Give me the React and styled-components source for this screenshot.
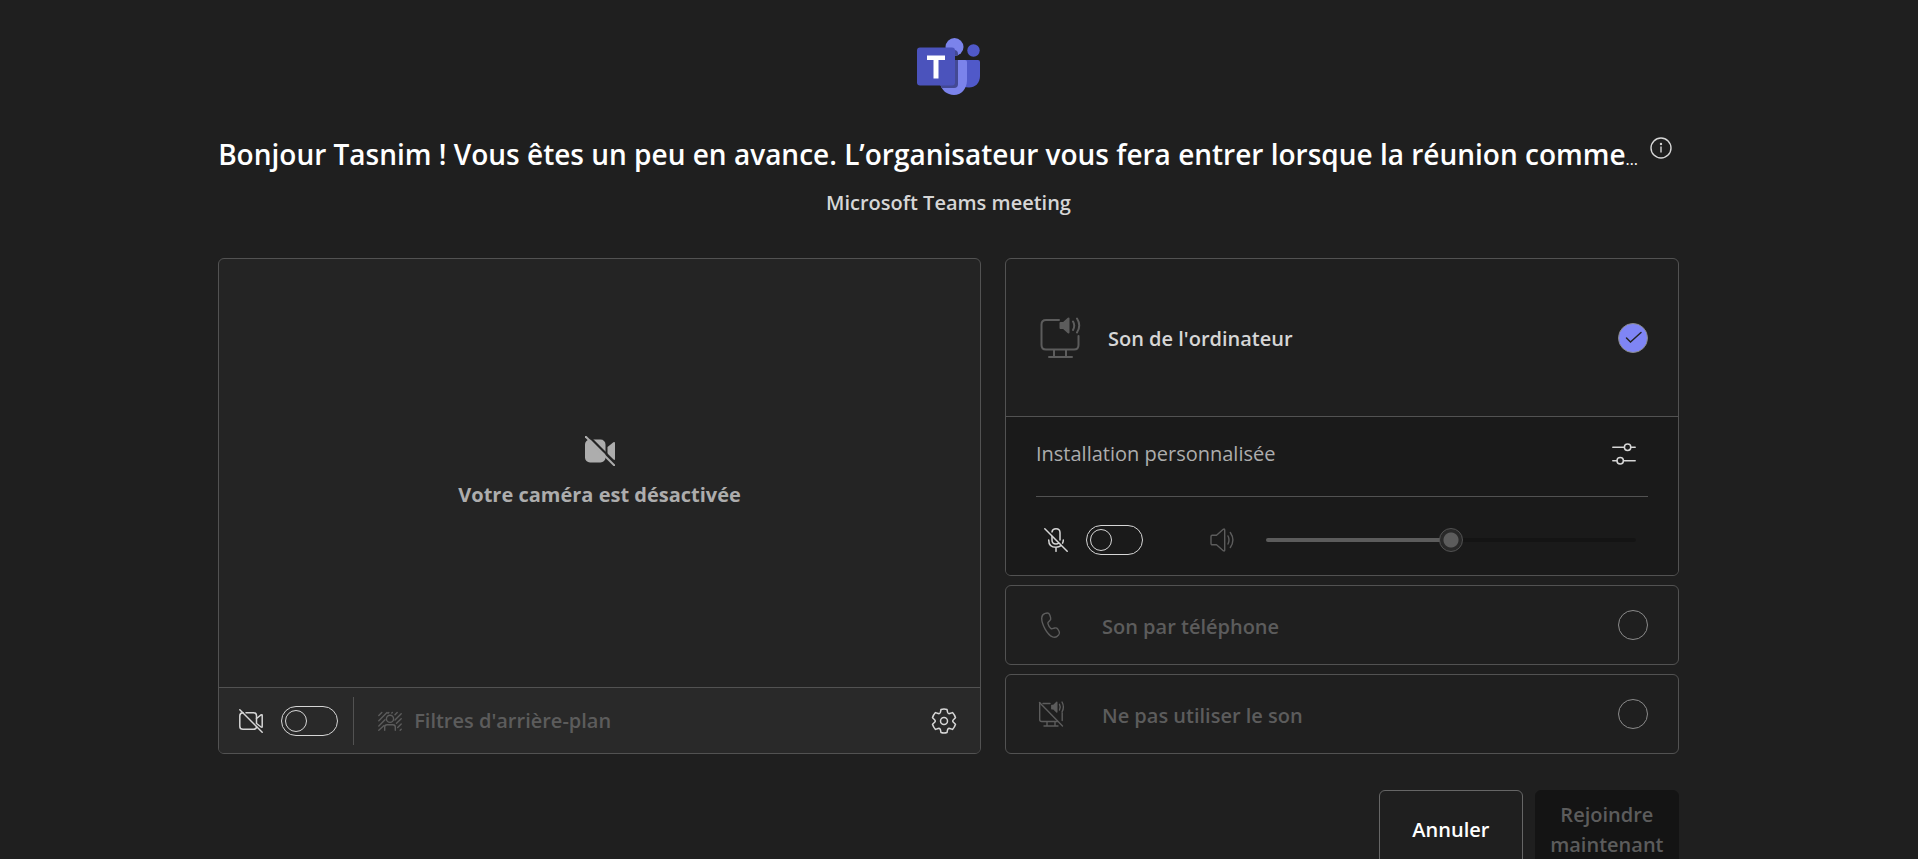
import React from "react";
import styled, { createGlobalStyle, css } from "styled-components";

const GlobalStyle = createGlobalStyle`
  *, *::before, *::after { box-sizing: border-box; }
  body {
    margin: 0;
    background: #1f1f1f;
    color: #d6d6d6;
    font-family: "Segoe UI", "Open Sans", "Noto Sans", sans-serif;
    font-size: 20px;
    line-height: 30px;
  }
  button, input { font: inherit; margin: 0; }
`;

const Page = styled.main`
  height: 100vh;
  overflow-y: auto;
  scrollbar-width: none;
  padding: 36px 21px 36px 0;
`;

const Content = styled.div`
  width: 77%;
  margin: 0 auto;
  display: flex;
  flex-direction: column;
`;

const Header = styled.header`
  display: flex;
  flex-direction: column;
  align-items: center;
  margin-bottom: 40px;
`;

const TitleRow = styled.div`
  display: flex;
  align-items: flex-start;
  gap: 4px;
  width: 100%;
  margin-top: 34px;
`;

const Title = styled.h1`
  flex: 1;
  min-width: 0;
  margin: 0;
  overflow: hidden;
  white-space: nowrap;
  color: #fff;
  font-size: 28px;
  font-weight: 600;
  line-height: 48px;
`;

const Ellipsis = styled.span`
  font-size: 16px;
  font-weight: 400;
`;

const Subtitle = styled.p`
  margin: 5px 0 0;
  font-weight: 600;
`;

const IconButton = styled.button`
  display: grid;
  place-items: center;
  flex: none;
  width: 36px;
  height: 36px;
  padding: 0;
  border: 0;
  background: none;
  color: #d6d6d6;
`;

const Panels = styled.div`
  display: grid;
  grid-template-columns: 763fr 674fr;
  gap: 24px;
`;

const panel = css`
  border: 1px solid #525252;
  border-radius: 6px;
  overflow: hidden;
`;

const VideoPanel = styled.section`
  ${panel}
  display: flex;
  flex-direction: column;
  background: #242424;
`;

const Preview = styled.div`
  flex: 1;
  display: flex;
  flex-direction: column;
  align-items: center;
  justify-content: center;
  gap: 14px;
  color: #adadad;
  font-weight: 700;
`;

const VideoBar = styled.div`
  display: flex;
  align-items: center;
  height: 66px;
  padding: 0 18px 0 20px;
  border-top: 1px solid #525252;
  background: #292929;
`;

const SwitchLabel = styled.label`
  display: flex;
  align-items: center;
  gap: 18px;
`;

const Switch = styled.input.attrs({ type: "checkbox", role: "switch" })`
  appearance: none;
  display: flex;
  align-items: center;
  width: 57px;
  height: 30px;
  padding: 0 3px;
  border: 1px solid #d6d6d6;
  border-radius: 15px;
  &::before {
    content: "";
    width: 22px;
    height: 22px;
    border: 1px solid #d6d6d6;
    border-radius: 50%;
  }
  &:checked { justify-content: flex-end; }
`;

const BarDivider = styled.span`
  width: 1px;
  height: 48px;
  margin: 0 24px 0 15px;
  background: #525252;
`;

const FilterButton = styled.button`
  display: flex;
  align-items: center;
  gap: 12px;
  margin-right: auto;
  padding: 0;
  border: 0;
  background: none;
  color: #5c5c5c;
  font-weight: 600;
`;

const AudioColumn = styled.fieldset`
  display: flex;
  flex-direction: column;
  gap: 9px;
  min-width: 0;
  margin: 0;
  padding: 0;
  border: 0;
`;

const AudioCard = styled.section`
  ${panel}
`;

const AudioOption = styled.label`
  display: flex;
  align-items: center;
  height: ${(p) => (p.$large ? 157 : 78)}px;
  padding: ${(p) => (p.$large ? "0 30px 0 34px" : "0 30px")};
  color: ${(p) => (p.$large ? "#d6d6d6" : "#5c5c5c")};
  font-weight: 600;
`;

const OptionIcon = styled.span`
  display: flex;
  color: #5c5c5c;
  width: ${(p) => (p.$large ? 68 : 66)}px;
`;

const OptionText = styled.span`
  padding-top: 3px;
`;

const RadioWrap = styled.span`
  display: grid;
  place-items: center;
  margin-left: auto;
  > * { grid-area: 1 / 1; }
`;

const Radio = styled.input.attrs({ type: "radio", name: "audio" })`
  appearance: none;
  width: 30px;
  height: 30px;
  border: 1px solid #8a8a8a;
  border-radius: 50%;
  &:checked { background: #7f85f5; }
`;

const CheckMark = styled.svg`
  pointer-events: none;
  z-index: 1;
`;

const AudioSettings = styled.div`
  padding: 0 30px;
  border-top: 1px solid #525252;
  background: #1a1a1a;
`;

const SetupRow = styled.div`
  display: flex;
  align-items: center;
  justify-content: space-between;
  height: 80px;
  padding: 0 6px 6px 0;
  border-bottom: 1px solid #525252;
  color: #adadad;
`;

const VolumeRow = styled.div`
  display: flex;
  align-items: center;
  height: 78px;
  padding: 8px 12px 0 8px;
`;

const VolumeLabel = styled.label`
  flex: 1;
  display: flex;
  align-items: center;
  gap: 32px;
  margin-left: 67px;
  color: #5c5c5c;
`;

const Slider = styled.input.attrs({ type: "range" })`
  appearance: none;
  flex: 1;
  min-width: 0;
  height: 24px;
  background: none;
  &::-webkit-slider-runnable-track {
    height: 4px;
    border-radius: 2px;
    background: linear-gradient(to right, #5c5c5c 50%, #141414 50%);
  }
  &::-webkit-slider-thumb {
    appearance: none;
    width: 24px;
    height: 24px;
    margin-top: -10px;
    border: 1px solid #525252;
    border-radius: 50%;
    background: radial-gradient(circle, #5c5c5c 7px, #292929 8px);
  }
`;

const Actions = styled.footer`
  display: flex;
  justify-content: flex-end;
  gap: 12px;
  margin-top: 36px;
`;

const ActionButton = styled.button`
  width: 144px;
  min-height: 80px;
  padding: 8px;
  border: 1px solid ${(p) => (p.$primary ? "#141414" : "#666")};
  border-radius: 6px;
  background: ${(p) => (p.$primary ? "#141414" : "#1f1f1f")};
  color: ${(p) => (p.$primary ? "#5c5c5c" : "#fff")};
  font-weight: 600;
`;

const Icon = ({ size = 24, box = 24, stroke = 1.5, children }) => (
  <svg
    width={size}
    height={size}
    viewBox={`0 0 ${box} ${box}`}
    fill="none"
    stroke="currentColor"
    strokeWidth={stroke}
    strokeLinecap="round"
    strokeLinejoin="round"
    aria-hidden="true"
  >
    {children}
  </svg>
);

const TeamsLogo = () => (
  <svg width="66" height="60" viewBox="0 0 66 60" role="img" aria-label="Microsoft Teams">
    <defs>
      <clipPath id="people">
        <circle cx="38.5" cy="11" r="9" />
        <path d="M27 24H49Q51 24 51 26V44C51 53 45 59 38 59C31 59 25 54 24 47Z" />
      </clipPath>
    </defs>
    <circle cx="57.5" cy="14.5" r="6.2" fill="#5059c9" />
    <path d="M46 24H62Q64 24 64 26V40C64 47 59 51.5 53 51.5Q50 51.5 47 50Z" fill="#5059c9" />
    <circle cx="38.5" cy="11" r="9" fill="#7b83eb" />
    <path d="M27 24H49Q51 24 51 26V44C51 53 45 59 38 59C31 59 25 54 24 47Z" fill="#7b83eb" />
    <rect x="4" y="14" width="38" height="38" rx="4" fill="#434994" clipPath="url(#people)" />
    <rect x="1" y="11.5" width="38" height="38" rx="3" fill="#4b53bc" />
    <path d="M11 19.5H29V24H22.5V42.5H17.5V24H11Z" fill="#fff" />
  </svg>
);

const InfoIcon = () => (
  <Icon size={22} box={22} stroke={1.4}>
    <circle cx="11" cy="11" r="10" />
    <path d="M11 10V15" />
    <circle cx="11" cy="7" r="0.5" fill="currentColor" />
  </Icon>
);

const CameraOffFilled = () => (
  <svg width="30" height="30" viewBox="0 0 30 30" aria-hidden="true">
    <defs>
      <mask id="cameraGap">
        <rect width="30" height="30" fill="#fff" />
        <path d="M1.5 -2L33 29.5" stroke="#000" strokeWidth="2.2" />
      </mask>
    </defs>
    <g fill="currentColor" mask="url(#cameraGap)">
      <rect x="0" y="3.5" width="20.5" height="23" rx="5" />
      <path d="M22.5 11L28.4 6.3Q30 5.4 30 7.2V22.8Q30 24.6 28.4 23.7L22.5 19Z" />
    </g>
    <path d="M0.8 0.8L29.2 29.2" stroke="currentColor" strokeWidth="2" strokeLinecap="round" />
  </svg>
);

const CameraOff = () => (
  <Icon>
    <path d="M4 3.7Q0.8 3.9 0.8 6.8V17.2Q0.8 20.3 4 20.3H14.5Q17.5 20.3 17.5 17.5M7 3.7H14.5Q17.5 3.7 17.5 6.8V14" />
    <path d="M17.5 9.5L22 5.9Q23.2 5.2 23.2 6.5V17.5Q23.2 18.8 22 18L17.5 14.5" />
    <path d="M0.8 0.8L23.2 23.2" />
  </Icon>
);

const FilterIcon = () => (
  <Icon stroke={1.4}>
    <path d="M0.8 6.5L3.8 3.5M0.8 11.8L9 3.5M0.8 17L7 10.8M0.8 21.2L6 16.5M10.8 3.5L10 4.3M14.3 3.5L13.8 4M19.2 3.5L17 5.8M23.2 4.8L17 11M23.2 9.8L18.5 14.3M23.2 15L19.7 18.5M23.2 20.2L22.2 21.2" />
    <circle cx="12" cy="9.8" r="3.6" />
    <path d="M6.7 21.2V18Q6.7 15.8 9 15.8H15Q17.3 15.8 17.3 18V21.2" />
  </Icon>
);

const GearIcon = () => (
  <Icon size={26} box={26}>
    <path d="M10 1.5Q13 0.5 16 1.5L16.6 4.4Q17.1 6 18.8 5.5L21.5 4.6Q23.7 6.9 24.5 9.8L22.4 11.7Q21 13 22.4 14.3L24.5 16.2Q23.7 19.1 21.5 21.4L18.8 20.5Q17.1 20 16.6 21.6L16 24.5Q13 25.5 10 24.5L9.4 21.6Q8.9 20 7.2 20.5L4.5 21.4Q2.3 19.1 1.5 16.2L3.6 14.3Q5 13 3.6 11.7L1.5 9.8Q2.3 6.9 4.5 4.6L7.2 5.5Q8.9 6 9.4 4.4Z" />
    <circle cx="13" cy="13" r="3.5" />
  </Icon>
);

const ComputerAudio = () => (
  <Icon size={42} box={42} stroke={2}>
    <path d="M19 3H6Q1.5 3 1.5 7.5V28Q1.5 32.5 6 32.5H34Q38.5 32.5 38.5 28V19M14 32.5V40M26 32.5V40M9 40H32" />
    <path d="M20.5 6H23.5L28.5 1.5V15.5L23.5 11H20.5Z" fill="currentColor" />
    <path d="M33 4.5Q35.5 8.5 33 13M37 1.5Q41.5 8.5 37 15.5" />
  </Icon>
);

const SettingsSliders = () => (
  <Icon>
    <path d="M0.8 5.3H12.2M19 5.3H23.2M0.8 18.7H4.8M11.6 18.7H23.2" />
    <circle cx="15.6" cy="5.3" r="3.2" />
    <circle cx="8.2" cy="18.7" r="3.2" />
  </Icon>
);

const MicOff = () => (
  <Icon>
    <path d="M8 3.9Q8.5 0.8 12 0.8Q16 0.8 16 4.8V12M8 8.5V12Q8 16 12 16Q13.6 16 14.7 15.2" />
    <path d="M4.7 12Q4.7 19.3 12 19.3Q15 19.3 17 17.7M19.3 12Q19.3 13.8 18.6 15.2M12 19.3V23.3" />
    <path d="M0.8 0.8L23.2 23.2" />
  </Icon>
);

const Speaker = () => (
  <Icon stroke={1.4}>
    <path d="M1 8.5Q1 7.3 2.2 7.3H6.5L13.3 1.3Q14.7 0.4 14.7 2V22Q14.7 23.6 13.3 22.7L6.5 16.7H2.2Q1 16.7 1 15.5Z" />
    <path d="M18 8Q20 12 18 16M20.3 4.5Q25.5 12 20.3 19.5" />
  </Icon>
);

const Phone = () => (
  <Icon size={30} box={30} stroke={1.4}>
    <path d="M8.6 3.7L10.2 3.2Q12.8 2.6 13.8 5L14.6 7.6Q15.1 9.3 13.9 10.6L12.2 12.3Q11.7 12.9 12 13.9Q12.7 16.5 14.8 18.4Q15.5 19 16.4 18.7L18.8 18Q20.6 17.5 21.7 19L23.1 21.3Q24.2 23.3 22.6 25L21.4 26.1Q19.2 28 16.6 26.9Q12.4 25 9 18.8Q5.7 12.7 5.7 8.2Q5.9 4.7 8.6 3.7Z" />
  </Icon>
);

const NoAudio = () => (
  <Icon size={30} box={30} stroke={1.4}>
    <path d="M7 4.5H14M3.7 3.7V20.5Q3.7 22.5 5.7 22.5H21.5M26.2 14V21.5M11 22.5V27M19 22.5V27M8 27H22" />
    <path d="M15.8 6.5H17.5L20.8 3.3V13L17.5 9.8H15.8Z" fill="currentColor" />
    <path d="M23.5 5.3Q25 8 23.5 11M26 3Q28.8 8 26 13M3.5 3.5L26.5 27" />
  </Icon>
);

const AudioRadio = ({ checked, ...rest }) => (
  <RadioWrap>
    <Radio defaultChecked={checked} {...rest} />
    {checked && (
      <CheckMark width="30" height="30" viewBox="0 0 30 30" fill="none" aria-hidden="true">
        <path d="M8.5 15L12.5 19L23 9.5" stroke="#242424" strokeWidth="1.5" strokeLinecap="round" />
      </CheckMark>
    )}
  </RadioWrap>
);

export default function App() {
  return (
    <>
      <GlobalStyle />
      <Page>
        <Content>
          <Header>
            <TeamsLogo />
            <TitleRow>
              <Title>
                Bonjour Tasnim ! Vous êtes un peu en avance. L’organisateur vous fera entrer lorsque la réunion comme
                <Ellipsis>…</Ellipsis>
              </Title>
              <IconButton aria-label="Informations"><InfoIcon /></IconButton>
            </TitleRow>
            <Subtitle>Microsoft Teams meeting</Subtitle>
          </Header>

          <Panels>
            <VideoPanel>
              <Preview>
                <CameraOffFilled />
                <span>Votre caméra est désactivée</span>
              </Preview>
              <VideoBar>
                <SwitchLabel>
                  <CameraOff />
                  <Switch aria-label="Caméra" />
                </SwitchLabel>
                <BarDivider />
                <FilterButton disabled>
                  <FilterIcon />
                  Filtres d'arrière-plan
                </FilterButton>
                <IconButton aria-label="Paramètres"><GearIcon /></IconButton>
              </VideoBar>
            </VideoPanel>

            <AudioColumn aria-label="Audio">
              <AudioCard>
                <AudioOption $large>
                  <OptionIcon $large><ComputerAudio /></OptionIcon>
                  <OptionText>Son de l'ordinateur</OptionText>
                  <AudioRadio checked />
                </AudioOption>
                <AudioSettings>
                  <SetupRow>
                    <span>Installation personnalisée</span>
                    <IconButton aria-label="Options audio"><SettingsSliders /></IconButton>
                  </SetupRow>
                  <VolumeRow>
                    <SwitchLabel>
                      <MicOff />
                      <Switch aria-label="Micro" />
                    </SwitchLabel>
                    <VolumeLabel>
                      <Speaker />
                      <Slider aria-label="Volume" defaultValue={50} disabled />
                    </VolumeLabel>
                  </VolumeRow>
                </AudioSettings>
              </AudioCard>
              <AudioCard>
                <AudioOption>
                  <OptionIcon><Phone /></OptionIcon>
                  <OptionText>Son par téléphone</OptionText>
                  <AudioRadio />
                </AudioOption>
              </AudioCard>
              <AudioCard>
                <AudioOption>
                  <OptionIcon><NoAudio /></OptionIcon>
                  <OptionText>Ne pas utiliser le son</OptionText>
                  <AudioRadio />
                </AudioOption>
              </AudioCard>
            </AudioColumn>
          </Panels>

          <Actions>
            <ActionButton>Annuler</ActionButton>
            <ActionButton $primary disabled>Rejoindre maintenant</ActionButton>
          </Actions>
        </Content>
      </Page>
    </>
  );
}
